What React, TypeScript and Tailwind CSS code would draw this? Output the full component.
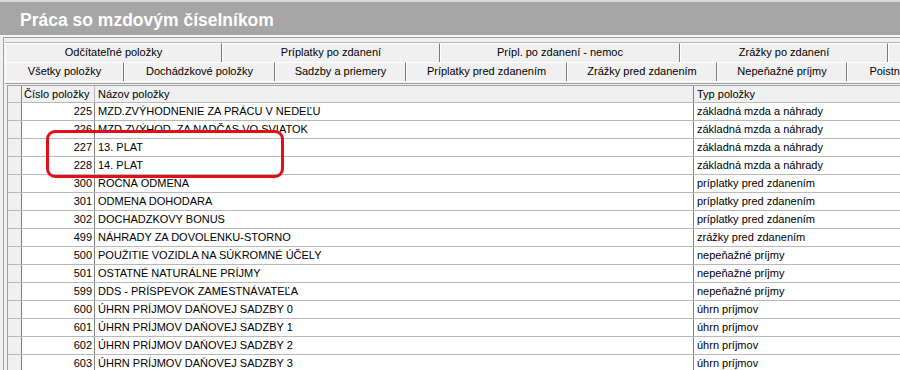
const backTabs = [
  { label: "Odčítateľné položky", w: 217 },
  { label: "Príplatky po zdanení", w: 218 },
  { label: "Prípl. po zdanení - nemoc", w: 240 },
  { label: "Zrážky po zdanení", w: 208 },
  { label: "", w: 200 },
];

const frontTabs = [
  { label: "Všetky položky", w: 119 },
  { label: "Dochádzkové položky", w: 151 },
  { label: "Sadzby a priemery", w: 131 },
  { label: "Príplatky pred zdanením", w: 161 },
  { label: "Zrážky pred zdanením", w: 150 },
  { label: "Nepeňažné príjmy", w: 130 },
  { label: "Poistné odvody", w: 120 },
];

const rows = [
  ["225", "MZD.ZVÝHODNENIE ZA PRÁCU V NEDEĽU", "základná mzda a náhrady"],
  ["226", "MZD.ZVÝHOD. ZA NADČAS VO SVIATOK", "základná mzda a náhrady"],
  ["227", "13. PLAT", "základná mzda a náhrady"],
  ["228", "14. PLAT", "základná mzda a náhrady"],
  ["300", "ROČNÁ ODMENA", "príplatky pred zdanením"],
  ["301", "ODMENA DOHODARA", "príplatky pred zdanením"],
  ["302", "DOCHADZKOVY BONUS", "príplatky pred zdanením"],
  ["499", "NÁHRADY ZA DOVOLENKU-STORNO", "zrážky pred zdanením"],
  ["500", "POUŽITIE VOZIDLA NA SÚKROMNÉ ÚČELY", "nepeňažné príjmy"],
  ["501", "OSTATNÉ NATURÁLNE PRÍJMY", "nepeňažné príjmy"],
  ["599", "DDS - PRÍSPEVOK ZAMESTNÁVATEĽA", "nepeňažné príjmy"],
  ["600", "ÚHRN PRÍJMOV DAŇOVEJ SADZBY 0", "úhrn príjmov"],
  ["601", "ÚHRN PRÍJMOV DAŇOVEJ SADZBY 1", "úhrn príjmov"],
  ["602", "ÚHRN PRÍJMOV DAŇOVEJ SADZBY 2", "úhrn príjmov"],
  ["603", "ÚHRN PRÍJMOV DAŇOVEJ SADZBY 3", "úhrn príjmov"],
];

function Tab({ label, w }: { label: string; w: number }) {
  return (
    <div
      className="flex h-[19px] shrink-0 items-center justify-center border-l border-t border-r border-l-white border-t-white border-r-[#7a7a7a] bg-[#f0f0f0] pb-[1px] whitespace-nowrap"
      style={{ width: w }}
    >
      {label}
    </div>
  );
}

export default function App() {
  return (
    <div className="relative h-[370px] w-[900px] overflow-hidden bg-[#f0f0f0] font-['Liberation_Sans',Arial,sans-serif] text-[11px] text-black">
      {/* Title bar */}
      <div className="h-[2px] bg-[#d9d9d9]" />
      <div className="flex h-[33px] items-center bg-[#a6a6a6] pl-[20px] pt-[3px] text-[17.5px] font-bold text-white">
        Práca so mzdovým číselníkom
      </div>
      <div className="h-[2px] bg-[#f7f7f7]" />

      {/* Frame */}
      <div className="ml-[3px] border-l border-t border-[#a0a0a0] pt-[4px] pl-[1px]">
        {/* Tabs */}
        <div className="flex border-t border-[#b4b4b4]">
          {backTabs.map((t, i) => (
            <Tab key={i} {...t} />
          ))}
        </div>
        <div className="flex">
          {frontTabs.map((t, i) => (
            <Tab key={i} {...t} />
          ))}
        </div>

        {/* Tab page */}
        <div className="border-t border-white pt-[1px]">
          <div className="border-t border-[#a0a0a0] pt-[1px] pl-[2px]">
            {/* Grid */}
            <div className="border-l border-t border-[#a0a0a0]">
              <div className="flex h-[17px] border-b border-[#b9b9b9] bg-[#f0f0f0]">
                <div className="w-[14px] shrink-0 border-r border-[#808080]" />
                <div className="w-[73px] shrink-0 border-r border-[#b9b9b9] pl-[2px] leading-[17px]">
                  Číslo položky
                </div>
                <div className="w-[599px] shrink-0 border-r border-[#808080] pl-[3px] leading-[17px]">
                  Názov položky
                </div>
                <div className="flex-1 pl-[3px] leading-[17px]">Typ položky</div>
              </div>
              {rows.map(([num, name, type]) => (
                <div key={num} className="flex h-[18px] border-b border-[#b9b9b9] bg-white">
                  <div className="w-[14px] shrink-0 border-r border-[#808080] bg-[#f0f0f0]" />
                  <div className="w-[73px] shrink-0 border-r border-[#808080] pr-[2px] text-right leading-[17px]">
                    {num}
                  </div>
                  <div className="w-[599px] shrink-0 border-r border-[#808080] pl-[3px] leading-[17px] whitespace-nowrap">
                    {name}
                  </div>
                  <div className="flex-1 pl-[3px] leading-[17px] whitespace-nowrap">{type}</div>
                </div>
              ))}
            </div>
          </div>
        </div>
      </div>

      {/* Highlight */}
      <div className="absolute left-[46px] top-[130px] h-[48px] w-[238px] rounded-[9px] border-[3px] border-[#e10f1a]" />
    </div>
  );
}
